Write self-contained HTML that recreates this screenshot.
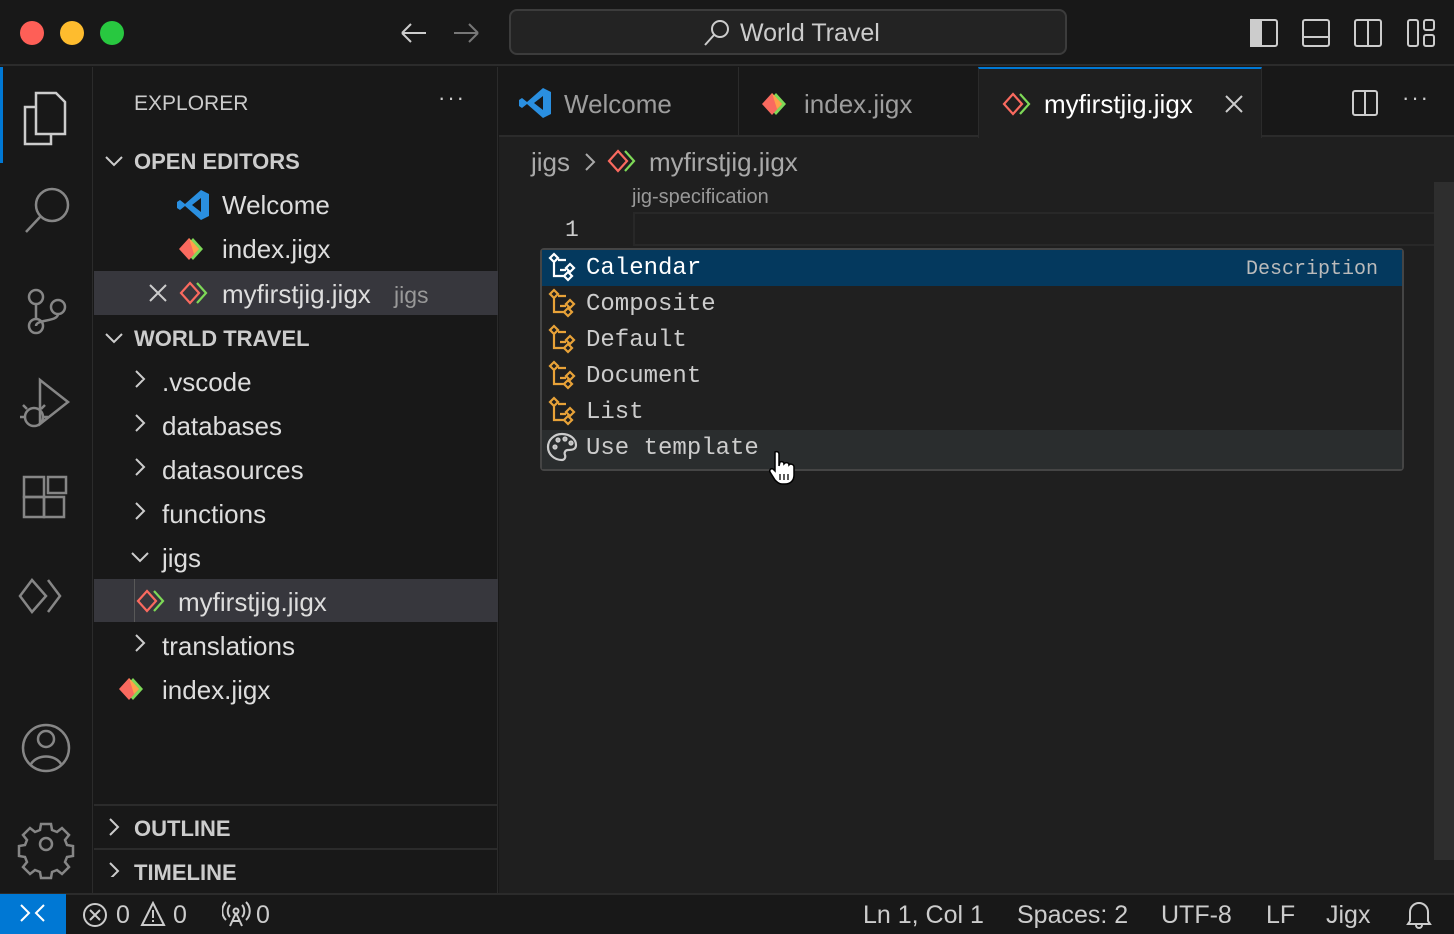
<!DOCTYPE html>
<html><head><meta charset="utf-8"><style>
*{box-sizing:border-box;margin:0;padding:0}
body{width:1454px;height:934px;background:#181818;font-family:"Liberation Sans",sans-serif;color:#ccc;position:relative;overflow:hidden}
.abs{position:absolute}
.t{position:absolute;white-space:nowrap}
.mono{font-family:"Liberation Mono",monospace}
</style></head><body>
<!-- title bar -->
<div class="abs" style="left:0;top:0;width:1454px;height:66px;background:#181818;border-bottom:2px solid #2b2b2b"></div>
<div class="abs" style="left:20px;top:21px;width:24px;height:24px;border-radius:50%;background:#fe5f57"></div>
<div class="abs" style="left:60px;top:21px;width:24px;height:24px;border-radius:50%;background:#febc2e"></div>
<div class="abs" style="left:100px;top:21px;width:24px;height:24px;border-radius:50%;background:#28c840"></div>
<svg class="abs" style="left:398px;top:20px" width="84" height="26" fill="none" stroke-width="2"><path d="M4 13h24M4 13l9-9M4 13l9 9" stroke="#ccc"/><path d="M80 13H56M80 13l-9-9M80 13l-9 9" stroke="#777"/></svg>
<div class="abs" style="left:509px;top:9px;width:558px;height:46px;border:2px solid #3c3c3c;border-radius:8px;background:#232323"></div>
<svg class="abs" style="left:702px;top:18px" width="30" height="30" fill="none" stroke="#ccc" stroke-width="2"><circle cx="18" cy="11" r="8"/><path d="M12 17 3 27"/></svg>
<div class="t" style="left:740px;top:19px;font-size:25px;color:#ccc">World Travel</div>
<svg class="abs" style="left:1248px;top:18px" width="190" height="30" fill="none" stroke="#ccc" stroke-width="2"><rect x="3" y="2" width="26" height="26" rx="2"/><rect x="3" y="2" width="10" height="26" fill="#ccc"/><rect x="55" y="2" width="26" height="26" rx="2"/><path d="M55 19h26"/><rect x="107" y="2" width="26" height="26" rx="2"/><path d="M120 2v26"/><rect x="160" y="2" width="10" height="26" rx="2"/><rect x="176" y="2" width="10" height="10" rx="2"/><rect x="176" y="17" width="10" height="11" rx="2"/></svg>

<!-- activity bar -->
<div class="abs" style="left:0;top:67px;width:93px;height:826px;background:#181818;border-right:1px solid #2b2b2b"></div>
<div class="abs" style="left:0;top:67px;width:3px;height:96px;background:#0078d4"></div>
<svg class="abs" style="left:0;top:67px" width="93" height="826" fill="none" stroke="#868686" stroke-width="2.5">
<g stroke="#ccc"><path d="M36 26h20l9 9v32H36z"/><path d="M36 40H25v37h26V67"/></g>
<circle cx="52" cy="138" r="16"/><path d="M40 150 26 165"/>
<circle cx="36" cy="230" r="7"/><circle cx="36" cy="259" r="7"/><circle cx="58" cy="240" r="7"/><path d="M36 237v15M58 247c0 8-22 5-22 12"/>
<path d="M40 313v44l28-22z"/><circle cx="34" cy="350" r="9"/><path d="M24 350h-4M44 350h4M27 342l-4-4M41 342l4-4"/>
<rect x="24" y="430" width="20" height="20"/><rect x="24" y="410" width="20" height="20"/><rect x="44" y="430" width="20" height="20"/><rect x="48" y="410" width="18" height="16"/>
<path d="M32 513l-12 16 12 16 14-16zM48 513l12 16-12 16"/>
<circle cx="46" cy="681" r="23"/><circle cx="46" cy="672" r="8"/><path d="M31 697c6-10 24-10 30 0"/>
<circle cx="46" cy="777" r="6"/>
<path d="M41 757h10l1 6 5 2 5-4 7 7-4 5 2 5 6 1v10l-6 1-2 5 4 5-7 7-5-4-5 2-1 6H41l-1-6-5-2-5 4-7-7 4-5-2-5-6-1v-10l6-1 2-5-4-5 7-7 5 4 5-2z"/>
</svg>

<!-- sidebar -->
<div class="abs" style="left:94px;top:67px;width:404px;height:826px;background:#181818;border-right:1px solid #2b2b2b"></div>
<div class="t" style="left:134px;top:92px;font-size:21px;color:#ccc">EXPLORER</div>
<div class="t" style="left:438px;top:85px;font-size:22px;color:#ccc;letter-spacing:2px">···</div>
<svg class="abs" style="left:104px;top:151px" width="20" height="20" fill="none" stroke="#ccc" stroke-width="2"><path d="M2 6l8 8 8-8"/></svg>
<div class="t" style="left:134px;top:149px;font-size:22px;font-weight:bold;color:#ccc">OPEN EDITORS</div>
<svg class="abs" style="left:177px;top:189px" width="34" height="32"><path d="M24 1 32 5v22l-8 4L8 17 3 21 0 19V13l3-2 5 4zM24 9 15 16l9 7z" fill="#2a8fe0"/></svg>
<div class="t" style="left:222px;top:190px;font-size:26px;color:#ddd">Welcome</div>
<svg class="abs" style="left:179px;top:236px" width="30" height="26"><path d="M14 2l10 11-10 11L4 13z" fill="#7ed957"/><path d="M10 2l10 11-10 11L0 13z" fill="#fa6a5f"/><path d="M10 2l10 11-5 5z" fill="#ffa14a"/></svg>
<div class="t" style="left:222px;top:234px;font-size:26px;color:#ddd">index.jigx</div>
<div class="abs" style="left:94px;top:271px;width:404px;height:44px;background:#37373d"></div>
<svg class="abs" style="left:148px;top:283px" width="20" height="20" stroke="#ccc" stroke-width="2"><path d="M2 2l16 16M18 2 2 18"/></svg>
<svg class="abs" style="left:179px;top:280px" width="30" height="26" fill="none" stroke-width="2.2"><path d="M18 3l9 10-9 10" stroke="#7ed957"/><path d="M11 3l9 10-9 10L2 13z" stroke="#fa6a5f"/></svg>
<div class="t" style="left:222px;top:279px;font-size:26px;color:#ddd">myfirstjig.jigx</div>
<div class="t" style="left:394px;top:282px;font-size:23px;color:#999">jigs</div>
<svg class="abs" style="left:104px;top:328px" width="20" height="20" fill="none" stroke="#ccc" stroke-width="2"><path d="M2 6l8 8 8-8"/></svg>
<div class="t" style="left:134px;top:326px;font-size:22px;font-weight:bold;color:#ccc">WORLD TRAVEL</div>
<svg class="abs" style="left:130px;top:367px" width="24" height="300" fill="none" stroke="#ccc" stroke-width="2"><path d="M6 4l8 8-8 8M6 48l8 8-8 8M6 92l8 8-8 8M6 136l8 8-8 8M2 186l8 8 8-8M6 268l8 8-8 8"/></svg>
<div class="t" style="left:162px;top:367px;font-size:26px;color:#ddd">.vscode</div>
<div class="t" style="left:162px;top:411px;font-size:26px;color:#ddd">databases</div>
<div class="t" style="left:162px;top:455px;font-size:26px;color:#ddd">datasources</div>
<div class="t" style="left:162px;top:499px;font-size:26px;color:#ddd">functions</div>
<div class="t" style="left:162px;top:543px;font-size:26px;color:#ddd">jigs</div>
<div class="abs" style="left:94px;top:579px;width:404px;height:43px;background:#37373d"></div>
<div class="abs" style="left:134px;top:579px;width:1px;height:43px;background:#585858"></div>
<svg class="abs" style="left:136px;top:588px" width="30" height="26" fill="none" stroke-width="2.2"><path d="M18 3l9 10-9 10" stroke="#7ed957"/><path d="M11 3l9 10-9 10L2 13z" stroke="#fa6a5f"/></svg>
<div class="t" style="left:178px;top:587px;font-size:26px;color:#ddd">myfirstjig.jigx</div>
<div class="t" style="left:162px;top:631px;font-size:26px;color:#ddd">translations</div>
<svg class="abs" style="left:119px;top:676px" width="30" height="26"><path d="M14 2l10 11-10 11L4 13z" fill="#7ed957"/><path d="M10 2l10 11-10 11L0 13z" fill="#fa6a5f"/><path d="M10 2l10 11-5 5z" fill="#ffa14a"/></svg>
<div class="t" style="left:162px;top:675px;font-size:26px;color:#ddd">index.jigx</div>
<div class="abs" style="left:94px;top:804px;width:404px;height:2px;background:#2b2b2b"></div>
<div class="abs" style="left:94px;top:848px;width:404px;height:2px;background:#2b2b2b"></div>
<svg class="abs" style="left:104px;top:817px" width="20" height="60" fill="none" stroke="#ccc" stroke-width="2"><path d="M6 2l8 8-8 8M6 46l8 8-8 8"/></svg>
<div class="t" style="left:134px;top:816px;font-size:22px;font-weight:bold;color:#ccc">OUTLINE</div>
<div class="t" style="left:134px;top:860px;font-size:22px;font-weight:bold;color:#ccc">TIMELINE</div>

<!-- editor -->
<div class="abs" style="left:499px;top:67px;width:955px;height:826px;background:#1f1f1f"></div>
<div class="abs" style="left:499px;top:67px;width:955px;height:70px;background:#181818;border-bottom:2px solid #2b2b2b"></div>
<div class="abs" style="left:738px;top:67px;width:1px;height:70px;background:#2b2b2b"></div>
<div class="abs" style="left:978px;top:67px;width:284px;height:71px;background:#1f1f1f;border-top:2px solid #0078d4;border-left:1px solid #2b2b2b;border-right:1px solid #2b2b2b"></div>
<svg class="abs" style="left:519px;top:87px" width="34" height="32"><path d="M24 1 32 5v22l-8 4L8 17 3 21 0 19V13l3-2 5 4zM24 9 15 16l9 7z" fill="#2a8fe0"/></svg>
<div class="t" style="left:564px;top:89px;font-size:26px;color:#9d9d9d">Welcome</div>
<svg class="abs" style="left:762px;top:91px" width="30" height="26"><path d="M14 2l10 11-10 11L4 13z" fill="#7ed957"/><path d="M10 2l10 11-10 11L0 13z" fill="#fa6a5f"/><path d="M10 2l10 11-5 5z" fill="#ffa14a"/></svg>
<div class="t" style="left:804px;top:89px;font-size:26px;color:#9d9d9d">index.jigx</div>
<svg class="abs" style="left:1002px;top:91px" width="30" height="26" fill="none" stroke-width="2.2"><path d="M18 3l9 10-9 10" stroke="#7ed957"/><path d="M11 3l9 10-9 10L2 13z" stroke="#fa6a5f"/></svg>
<div class="t" style="left:1044px;top:89px;font-size:26px;color:#fff">myfirstjig.jigx</div>
<svg class="abs" style="left:1224px;top:94px" width="20" height="20" stroke="#ccc" stroke-width="2"><path d="M2 2l16 16M18 2 2 18"/></svg>
<svg class="abs" style="left:1350px;top:89px" width="30" height="28" fill="none" stroke="#ccc" stroke-width="2"><rect x="3" y="2" width="24" height="24" rx="2"/><path d="M15 2v24"/></svg>
<div class="t" style="left:1402px;top:85px;font-size:22px;color:#ccc;letter-spacing:2px">···</div>
<div class="t" style="left:531px;top:147px;font-size:26px;color:#a9a9a9">jigs</div>
<svg class="abs" style="left:582px;top:151px" width="16" height="22" fill="none" stroke="#a9a9a9" stroke-width="2"><path d="M4 3l8 8-8 8"/></svg>
<svg class="abs" style="left:607px;top:148px" width="30" height="26" fill="none" stroke-width="2.2"><path d="M18 3l9 10-9 10" stroke="#7ed957"/><path d="M11 3l9 10-9 10L2 13z" stroke="#fa6a5f"/></svg>
<div class="t" style="left:649px;top:147px;font-size:26px;color:#a9a9a9">myfirstjig.jigx</div>
<div class="t" style="left:632px;top:186px;font-size:20px;color:#999">jig-specification</div>
<div class="abs" style="left:633px;top:212px;width:821px;height:34px;border:2px solid #282828;border-right:none"></div>
<div class="t mono" style="left:565px;top:217px;font-size:23px;color:#ccc">1</div>
<div class="abs" style="left:1434px;top:182px;width:20px;height:678px;background:#2e2e2e"></div>

<!-- suggest -->
<div class="abs" style="left:540px;top:248px;width:864px;height:223px;background:#202020;border:2px solid #454545;border-radius:4px"></div>
<div class="abs" style="left:542px;top:250px;width:860px;height:36px;background:#04395e"></div>
<div class="abs" style="left:542px;top:430px;width:860px;height:39px;background:#2a2d2e"></div>
<svg class="abs" style="left:546px;top:252px" width="34" height="212" fill="none" stroke-width="2.2">
<g stroke="#fff"><path d="M4 6l4-4 4 4-4 4zM8 10v14h10M12 8h8M20 16l4-4 4 4-4 4zM18 24l4-4 4 4-4 4zM14 18h6"/></g>
<g stroke="#e8a238" transform="translate(0 36)"><path d="M4 6l4-4 4 4-4 4zM8 10v14h10M12 8h8M20 16l4-4 4 4-4 4zM18 24l4-4 4 4-4 4zM14 18h6"/></g>
<g stroke="#e8a238" transform="translate(0 72)"><path d="M4 6l4-4 4 4-4 4zM8 10v14h10M12 8h8M20 16l4-4 4 4-4 4zM18 24l4-4 4 4-4 4zM14 18h6"/></g>
<g stroke="#e8a238" transform="translate(0 108)"><path d="M4 6l4-4 4 4-4 4zM8 10v14h10M12 8h8M20 16l4-4 4 4-4 4zM18 24l4-4 4 4-4 4zM14 18h6"/></g>
<g stroke="#e8a238" transform="translate(0 144)"><path d="M4 6l4-4 4 4-4 4zM8 10v14h10M12 8h8M20 16l4-4 4 4-4 4zM18 24l4-4 4 4-4 4zM14 18h6"/></g>
<g stroke="#ccc" transform="translate(0 180)"><path d="M16 28C8 28 2 22 2 15S8 2 16 2s14 5 14 11c0 5-5 5-8 5s-4 3-3 5c1 3-1 5-3 5z"/><circle cx="9" cy="15" r="1.5"/><circle cx="12" cy="8" r="1.5"/><circle cx="19" cy="7" r="1.5"/><circle cx="25" cy="11" r="1.5"/></g>
</svg>
<div class="t mono" style="left:586px;top:255px;font-size:24px;color:#fff">Calendar</div>
<div class="t mono" style="left:1246px;top:258px;font-size:20px;color:#bbb">Description</div>
<div class="t mono" style="left:586px;top:291px;font-size:24px;color:#ccc">Composite</div>
<div class="t mono" style="left:586px;top:327px;font-size:24px;color:#ccc">Default</div>
<div class="t mono" style="left:586px;top:363px;font-size:24px;color:#ccc">Document</div>
<div class="t mono" style="left:586px;top:399px;font-size:24px;color:#ccc">List</div>
<div class="t mono" style="left:586px;top:435px;font-size:24px;color:#ccc">Use template</div>
<svg class="abs" style="left:768px;top:450px" width="30" height="36"><path d="M7 2c2-1 4 0 4 2v12l1-4c2-1 4 0 4 2l1-1c2-1 4 0 4 2l1-1c2 0 4 1 4 3v8c0 5-3 9-9 9h-3c-3 0-5-2-7-4L2 22c-1-2 1-4 3-3l2 2V4z" fill="#fff" stroke="#000" stroke-width="1.5"/><path d="M12 24v6M16 24v6M20 24v6" stroke="#000" stroke-width="1.3"/></svg>

<!-- status bar -->
<div class="abs" style="left:0;top:893px;width:1454px;height:41px;background:#181818;border-top:2px solid #2b2b2b"></div>
<div class="abs" style="left:0;top:894px;width:66px;height:40px;background:#0078d4"></div>
<svg class="abs" style="left:18px;top:901px" width="30" height="26" fill="none" stroke="#fff" stroke-width="2"><path d="M3 4l8 8-8 8M26 4l-8 8 8 8"/></svg>
<svg class="abs" style="left:82px;top:902px" width="30" height="26" fill="none" stroke="#ccc" stroke-width="2"><circle cx="13" cy="13" r="11"/><path d="M8 8l10 10M18 8 8 18"/></svg>
<div class="t" style="left:116px;top:901px;font-size:25px;color:#ccc">0</div>
<svg class="abs" style="left:140px;top:901px" width="28" height="26" fill="none" stroke="#ccc" stroke-width="2"><path d="M13 2 2 24h22zM13 9v8M13 19v2"/></svg>
<div class="t" style="left:173px;top:901px;font-size:25px;color:#ccc">0</div>
<svg class="abs" style="left:222px;top:901px" width="30" height="26" fill="none" stroke="#ccc" stroke-width="2"><circle cx="14" cy="10" r="2.5"/><path d="M14 12l-6 13M14 12l6 13M10 20h8M8 4c-3 3-3 9 0 12M20 4c3 3 3 9 0 12M4 1c-5 5-5 13 0 18M24 1c5 5 5 13 0 18"/></svg>
<div class="t" style="left:256px;top:901px;font-size:25px;color:#ccc">0</div>
<div class="t" style="left:863px;top:901px;font-size:25px;color:#ccc">Ln 1, Col 1</div>
<div class="t" style="left:1017px;top:901px;font-size:25px;color:#ccc">Spaces: 2</div>
<div class="t" style="left:1161px;top:901px;font-size:25px;color:#ccc">UTF-8</div>
<div class="t" style="left:1266px;top:901px;font-size:25px;color:#ccc">LF</div>
<div class="t" style="left:1326px;top:901px;font-size:25px;color:#ccc">Jigx</div>
<svg class="abs" style="left:1406px;top:900px" width="26" height="30" fill="none" stroke="#ccc" stroke-width="2"><path d="M4 21V12a9 9 0 0 1 18 0v9l2 3H2zM10 25a3 3 0 0 0 6 0"/></svg>
</body></html>
